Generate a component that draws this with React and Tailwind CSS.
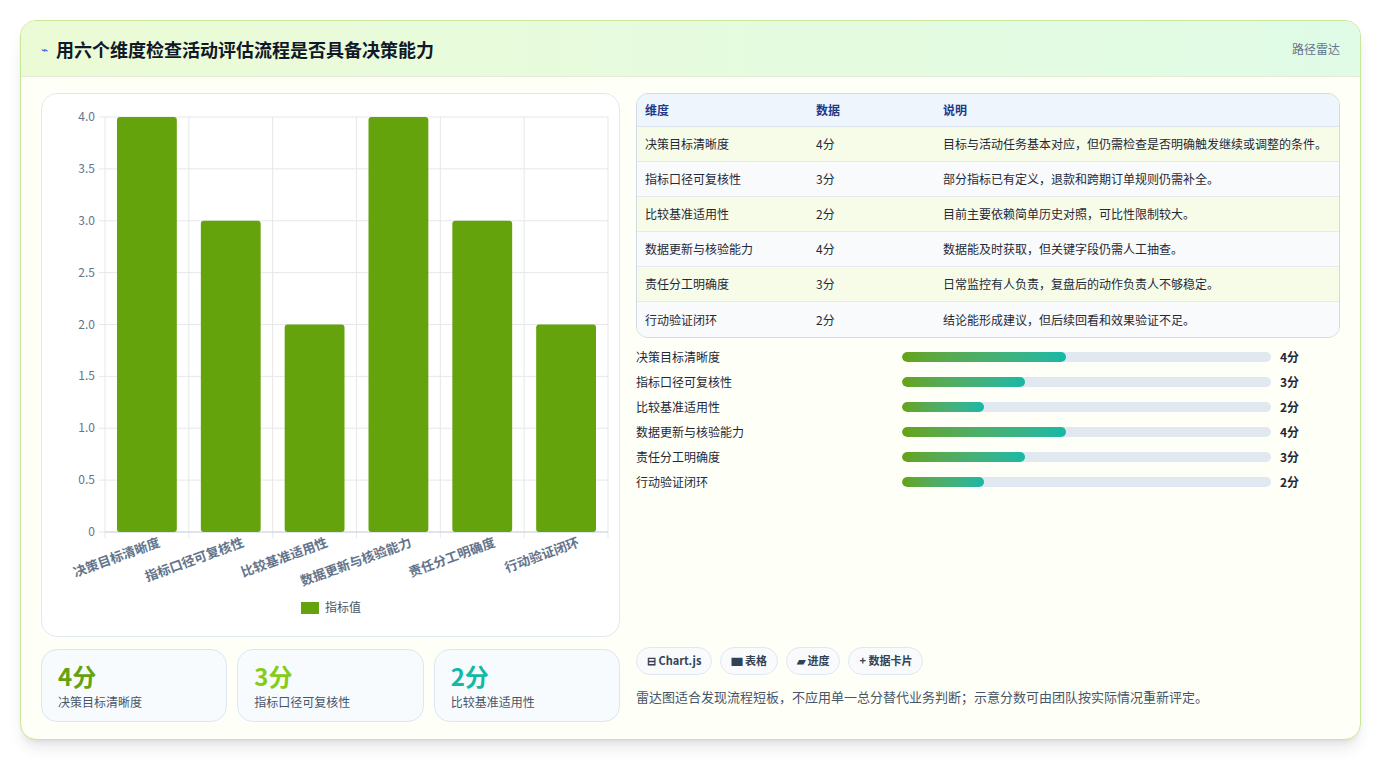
const dims = [
  ["决策目标清晰度", 4, "目标与活动任务基本对应，但仍需检查是否明确触发继续或调整的条件。"],
  ["指标口径可复核性", 3, "部分指标已有定义，退款和跨期订单规则仍需补全。"],
  ["比较基准适用性", 2, "目前主要依赖简单历史对照，可比性限制较大。"],
  ["数据更新与核验能力", 4, "数据能及时获取，但关键字段仍需人工抽查。"],
  ["责任分工明确度", 3, "日常监控有人负责，复盘后的动作负责人不够稳定。"],
  ["行动验证闭环", 2, "结论能形成建议，但后续回看和效果验证不足。"],
];

const font = { fontFamily: '"Noto Sans CJK SC", "Noto Sans", sans-serif' };

function Chart() {
  const left = 63, right = 566, top = 23, bottom = 438;
  const col = (right - left) / 6;
  const h = bottom - top;
  const ticks = [0, 0.5, 1, 1.5, 2, 2.5, 3, 3.5, 4];
  return (
    <svg width="578" height="543" style={font}>
      {ticks.map((t) => {
        const y = bottom - (t / 4) * h;
        return (
          <g key={t}>
            <line x1={left - 6} x2={right} y1={y} y2={y} stroke="#e5e7eb" />
            <text x={left - 10} y={y + 4} textAnchor="end" fontSize="12" fill="#64748b">
              {t === 0 ? "0" : t.toFixed(1)}
            </text>
          </g>
        );
      })}
      {Array.from({ length: 7 }).map((_, i) => (
        <line key={i} x1={left + i * col} x2={left + i * col} y1={top} y2={bottom + 6} stroke="#e5e7eb" />
      ))}
      <line x1={left} x2={right} y1={bottom} y2={bottom} stroke="#cbd5e1" />
      {dims.map(([n, v], i) => {
        const bh = (v / 4) * h;
        const x = left + i * col + 12;
        return <rect key={n} x={x} y={bottom - bh} width={col - 24} height={bh} rx="3" fill="#65a30d" />;
      })}
      {dims.map(([n], i) => {
        const cx = left + i * col + col / 2 + 14;
        return (
          <text key={n} x={cx} y={bottom + 14} textAnchor="end" fontSize="13" fontWeight="600" fill="#64748b"
            transform={`rotate(-20 ${cx} ${bottom + 14})`}>
            {n}
          </text>
        );
      })}
      <rect x="259" y="508" width="18" height="12" fill="#65a30d" />
      <text x="283" y="518" fontSize="12" fill="#475569">指标值</text>
    </svg>
  );
}

export default function App() {
  const stats = [
    ["4分", "决策目标清晰度", "text-[#65a30d]"],
    ["3分", "指标口径可复核性", "text-[#84cc16]"],
    ["2分", "比较基准适用性", "text-[#14b8a6]"],
  ];
  return (
    <div className="w-[1381px] h-[760px] bg-white p-5" style={font}>
      <div className="rounded-2xl border border-[#c7e89a] bg-[#fefff7] shadow-lg overflow-hidden h-[720px]">
        <div className="h-14 flex items-center justify-between px-5 bg-gradient-to-r from-[#ecfbd6] to-[#e0fbe6] border-b border-[#e2ecd6]">
          <div className="flex items-center gap-2">
            <span className="text-[#2563eb] text-xs">⌁</span>
            <h1 className="text-lg font-bold text-[#111827]">用六个维度检查活动评估流程是否具备决策能力</h1>
          </div>
          <span className="text-xs text-[#64748b]">路径雷达</span>
        </div>
        <div className="flex gap-4 px-5 pt-4">
          <div className="w-[579px] flex flex-col gap-3">
            <div className="h-[544px] rounded-2xl border border-[#e2e8f0] bg-white overflow-hidden">
              <Chart />
            </div>
            <div className="grid grid-cols-3 gap-[10px]">
              {stats.map(([v, l, c]) => (
                <div key={l} className="h-[73px] rounded-2xl border border-[#dbe7f3] bg-[#f8fbfe] px-4 pt-3">
                  <div className={`text-2xl font-bold leading-7 ${c}`}>{v}</div>
                  <div className="text-xs text-[#475569] mt-1">{l}</div>
                </div>
              ))}
            </div>
          </div>
          <div className="flex-1 flex flex-col">
            <div className="rounded-xl border border-[#d1d9e2] overflow-hidden text-xs">
              <div className="flex h-[33px] items-center bg-[#eef5fd] border-b border-[#dbe3ee] text-[#1e3a8a] font-semibold">
                <div className="w-[179px] pl-2">维度</div>
                <div className="w-[127px]">数据</div>
                <div>说明</div>
              </div>
              {dims.map(([n, v, d], i) => (
                <div key={n} className={`flex h-[35px] items-center text-[#1f2937] ${i < 5 ? "border-b border-[#e5eaf0]" : ""} ${i % 2 === 0 ? "bg-[#f7fce9]" : "bg-[#f8fafc]"}`}>
                  <div className="w-[179px] pl-2">{n}</div>
                  <div className="w-[127px]">{v}分</div>
                  <div>{d}</div>
                </div>
              ))}
            </div>
            <div className="flex flex-col gap-[7px] mt-[10px]">
              {dims.map(([n, v]) => (
                <div key={n} className="flex items-center h-[18px] text-xs text-[#1f2937]">
                  <div className="w-[266px]">{n}</div>
                  <div className="w-[369px] h-[10px] rounded-full bg-[#e2e8f0] overflow-hidden">
                    <div className="h-full rounded-full bg-gradient-to-r from-[#65a30d] to-[#14b8a6]" style={{ width: `${(v / 9) * 100}%` }} />
                  </div>
                  <div className="ml-[9px] font-bold">{v}分</div>
                </div>
              ))}
            </div>
            <div className="mt-auto pb-4">
              <div className="flex gap-2">
                {["⊟ Chart.js", "▆ 表格", "▰ 进度", "+ 数据卡片"].map((c) => (
                  <span key={c} className="h-[28px] px-2.5 flex items-center rounded-full border border-[#e2e8f0] bg-[#f8fafc] text-[11px] font-semibold text-[#334155]">
                    {c}
                  </span>
                ))}
              </div>
              <p className="mt-3 text-[13px] text-[#475569]">雷达图适合发现流程短板，不应用单一总分替代业务判断；示意分数可由团队按实际情况重新评定。</p>
            </div>
          </div>
        </div>
      </div>
    </div>
  );
}
